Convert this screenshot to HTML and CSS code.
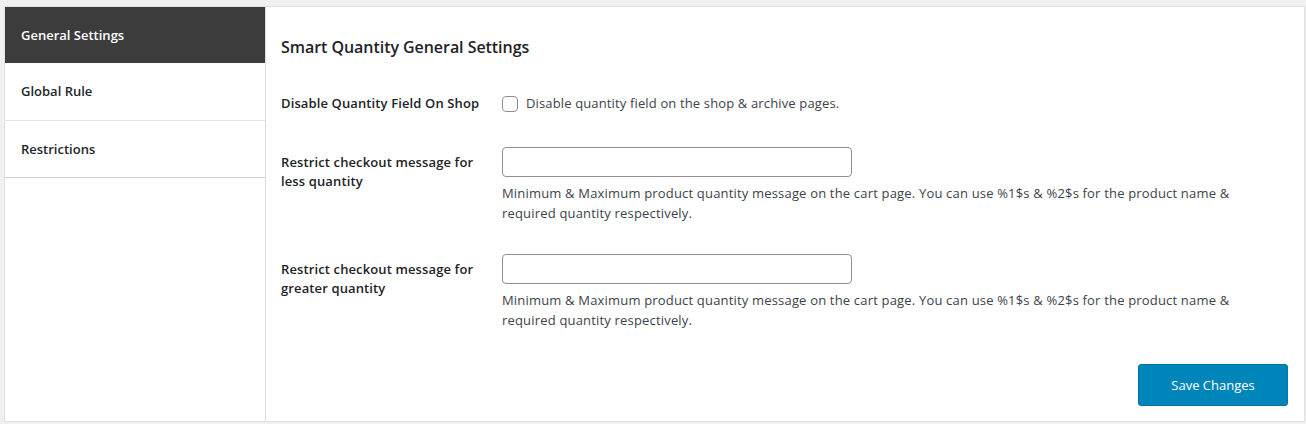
FILE: index.html
```html
<!DOCTYPE html>
<html>
<head>
<meta charset="utf-8">
<link rel="stylesheet" href="styles.css">
</head>
<body>
<div class="panel">
  <nav class="sidebar">
    <a class="nav-item active">General Settings</a>
    <a class="nav-item">Global Rule</a>
    <a class="nav-item last">Restrictions</a>
  </nav>
  <main class="content">
    <h2 class="title">Smart Quantity General Settings</h2>
    <div class="field-row first">
      <div class="label">Disable Quantity Field On Shop</div>
      <div class="control inline">
        <input type="checkbox" class="checkbox" id="dq">
        <label for="dq" class="cb-text">Disable quantity field on the shop &amp; archive pages.</label>
      </div>
    </div>
    <div class="field-row second">
      <div class="label pad">Restrict checkout message for<br>less quantity</div>
      <div class="control">
        <input type="text" class="text-input">
        <p class="desc">Minimum &amp; Maximum product quantity message on the cart page. You can use %1$s &amp; %2$s for the product name &amp;<br>required quantity respectively.</p>
      </div>
    </div>
    <div class="field-row">
      <div class="label pad">Restrict checkout message for<br>greater quantity</div>
      <div class="control">
        <input type="text" class="text-input">
        <p class="desc">Minimum &amp; Maximum product quantity message on the cart page. You can use %1$s &amp; %2$s for the product name &amp;<br>required quantity respectively.</p>
      </div>
    </div>
    <div class="actions">
      <button class="btn-primary">Save Changes</button>
    </div>
  </main>
</div>
</body>
</html>
```
FILE: styles.css
```css
html, body {
  margin: 0;
  padding: 0;
  background: #f0f0f1;
  font-family: "Open Sans", "Noto Sans", sans-serif;
  font-size: 13px;
  color: #3c434a;
}
.panel {
  margin: 6px 1px 2px 4px;
  height: 414px;
  border: 1px solid #e2e2e2;
  background: #fff;
  display: flex;
}
.sidebar {
  width: 260px;
  border-right: 1px solid #dcdcde;
  display: flex;
  flex-direction: column;
  flex-shrink: 0;
}
.nav-item {
  display: flex;
  align-items: center;
  height: 56.5px;
  padding-left: 16px;
  font-weight: 600;
  color: #23282d;
  border-bottom: 1px solid #e5e5e5;
}
.nav-item.active {
  height: 56px;
  background: #3c3c3c;
  color: #fff;
  border-bottom: none;
}
.nav-item.last {
  border-bottom-color: #cfcfcf;
}
.content {
  flex: 1;
  padding: 28px 16px 0 15px;
  display: flex;
  flex-direction: column;
}
.title {
  margin: 0;
  font-size: 16px;
  line-height: 24px;
  font-weight: 600;
  color: #1d2327;
  letter-spacing: -0.05px;
}
.field-row {
  display: grid;
  grid-template-columns: 221px 1fr;
  align-items: start;
  margin-top: 31.5px;
}
.field-row.first {
  margin-top: 34px;
}
.field-row.second {
  margin-top: 33px;
}
.label {
  font-weight: 600;
  line-height: 21px;
  color: #1d2327;
  letter-spacing: 0.12px;
}
.label.pad {
  padding-top: 5.5px;
  line-height: 19.5px;
}
.control.inline {
  display: flex;
  align-items: center;
  gap: 8px;
  height: 21px;
}
.checkbox {
  appearance: none;
  -webkit-appearance: none;
  margin: 0;
  width: 16px;
  height: 16px;
  border: 1px solid #8c8f94;
  border-radius: 4px;
  background: #fff;
}
.cb-text {
  line-height: 21px;
  letter-spacing: 0.14px;
}
.text-input {
  display: block;
  box-sizing: border-box;
  width: 350px;
  height: 30px;
  margin: 0;
  border: 1px solid #8c8f94;
  border-radius: 4px;
  background: #fff;
}
.desc {
  margin: 5.5px 0 0;
  line-height: 20px;
  color: #3c434a;
  letter-spacing: 0.18px;
}
.actions {
  margin-top: 34.5px;
  display: flex;
  justify-content: flex-end;
}
.btn-primary {
  width: 150px;
  height: 42px;
  background: #0085ba;
  border: 1px solid #0073aa;
  border-radius: 3px;
  color: #fff;
  font-family: inherit;
  font-size: 13px;
}
```
